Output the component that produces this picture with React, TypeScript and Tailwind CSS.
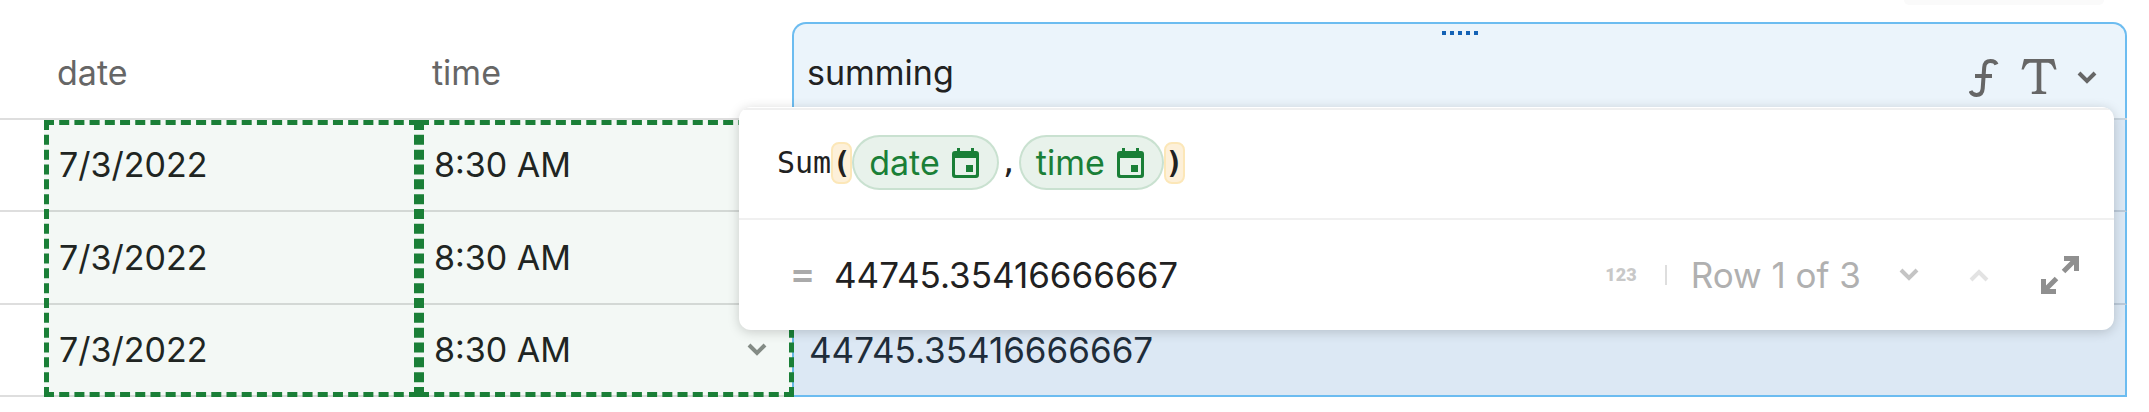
type Row = { id: number; date: string; time: string; summing: string };

const rows: Row[] = [
  { id: 1, date: "7/3/2022", time: "8:30 AM", summing: "44745.35416666667" },
  { id: 2, date: "7/3/2022", time: "8:30 AM", summing: "44745.35416666667" },
  { id: 3, date: "7/3/2022", time: "8:30 AM", summing: "44745.35416666667" },
];

function Chevron({ up = false }: { up?: boolean }) {
  return (
    <svg viewBox="0 0 20 14" className="h-[14px] w-5" fill="none" stroke="currentColor" strokeWidth="4">
      <path d={up ? "M2 12 10 4l8 8" : "M2 2l8 8 8-8"} />
    </svg>
  );
}

function FunctionIcon() {
  return (
    <svg viewBox="0 0 30 38" className="h-[38px] w-[30px]" fill="none" stroke="currentColor">
      <path
        d="M27.5 5.5C26.5 2.5 23.5 2 21.5 2 17.500 2 15.500 4.500 15.200 8.500L13.700 29.500C13.400 34 11 36 7.500 36 4.500 36 2.500 34.500 1.500 32"
        strokeWidth="4"
      />
      <path d="M6 17h17" strokeWidth="4" />
    </svg>
  );
}

function TextTypeIcon() {
  return (
    <svg viewBox="0 0 36 35" className="h-[35px] w-9" fill="currentColor">
      <path d="M3 0h30l2.500 10.500h-2.300C31.500 6.500 29.500 3.800 26 3.800H20.300V30.500c0 1.300.8 1.700 2.200 1.900l2.700.4V35H10.800v-2.200l2.700-.4c1.400-.2 2.200-.6 2.200-1.900V3.800H10C6.500 3.800 4.500 6.500 2.800 10.500H.5z" />
    </svg>
  );
}

function CalendarIcon() {
  return (
    <svg viewBox="0 0 27 30" className="h-[30px] w-[27px]" fill="currentColor">
      <path
        fillRule="evenodd"
        d="M5 0h3v3h11V0h3v3h2a3 3 0 0 1 3 3v21a3 3 0 0 1-3 3H3a3 3 0 0 1-3-3V6a3 3 0 0 1 3-3h2zM3 10v16a1 1 0 0 0 1 1h19a1 1 0 0 0 1-1V10z"
      />
      <path d="M14 17h7v7h-7z" />
    </svg>
  );
}

function ExpandIcon() {
  return (
    <svg viewBox="0 0 40 40" className="h-10 w-10" fill="none" stroke="currentColor" strokeWidth="5">
      <path d="M24 3.500H36.500V16M36.500 3.500 23.500 16.500" />
      <path d="M3.500 24V36.500H16M3.500 36.500 16.500 23.500" />
    </svg>
  );
}

function ColumnChip({ name }: { name: string }) {
  return (
    <span className="flex h-[55px] items-center gap-3 rounded-full border-2 border-[#1a7f37]/15 bg-[#1a7f37]/10 pr-[18px] pl-[15px] text-[#1a7f37]">
      {name}
      <CalendarIcon />
    </span>
  );
}

function Paren({ children }: { children: string }) {
  return (
    <span className="flex h-[42px] w-[21px] items-center justify-center rounded-lg border-2 border-[#fce7b8] bg-[#fdf0d9] font-bold">
      {children}
    </span>
  );
}

function FormulaPopup() {
  return (
    <div
      role="dialog"
      aria-label="Formula"
      className="absolute top-[107px] right-[35px] left-[739px] overflow-hidden rounded-xl bg-white pt-px text-[#212121] shadow-[0_2px_12px_rgba(0,0,0,0.18)]"
    >
      <div className="flex h-[110px] items-start border-t-2 border-[#f0f0f0] pt-[25px] pl-[38px]">
        <code className="flex h-[55px] items-center font-['DejaVu_Sans_Mono',monospace] text-[30px]">
          Sum
          <Paren>(</Paren>
        </code>
        <ColumnChip name="date" />
        <code className="flex h-[55px] items-center px-px font-['DejaVu_Sans_Mono',monospace] text-[30px]">,</code>
        <ColumnChip name="time" />
        <code className="flex h-[55px] items-center font-['DejaVu_Sans_Mono',monospace] text-[30px]">
          <Paren>)</Paren>
        </code>
      </div>

      <div className="flex h-28 items-center border-t-2 border-[#f0f0f0] pr-[34px] pl-[53px] text-[35px]">
        <span className="w-[42px] font-['DejaVu_Sans_Mono',monospace] font-bold text-[#aaaaaa]">=</span>
        <output>44745.35416666667</output>
        <div className="ml-auto flex items-center text-[#b0b0b0]">
          <span className="font-['Roboto',sans-serif] text-lg font-black text-[#c8c8c8]">123</span>
          <span className="mr-6 ml-7 h-5 w-0.5 bg-[#dedede]" />
          <span>Row 1 of 3</span>
          <button type="button" aria-label="Next row" className="ml-[38px] text-[#c4c4c4]">
            <Chevron />
          </button>
          <button type="button" aria-label="Previous row" disabled className="ml-[50px] text-[#e3e3e3]">
            <Chevron up />
          </button>
          <button type="button" aria-label="Expand" className="ml-[51px] text-[#8f8f8f]">
            <ExpandIcon />
          </button>
        </div>
      </div>
    </div>
  );
}

export default function App() {
  return (
    <div className="relative bg-white pr-[22px] font-['Inter',sans-serif] text-[34px] leading-[44px] text-[#212121]">
      <div className="absolute top-0 right-[45px] h-[5px] w-[200px] rounded-b-lg bg-[#fafafa]" />

      <table className="w-full table-fixed border-separate border-spacing-0 text-left">
        <colgroup>
          <col className="w-11" />
          <col className="w-[375px]" />
          <col className="w-[373px]" />
          <col />
        </colgroup>
        <thead>
          <tr className="h-[120px] text-[#666666]">
            <td className="border-b-2 border-[#dedede]" />
            <th className="border-b-2 border-[#dedede] p-0 pt-[27px] pl-[13px] font-normal">date</th>
            <th className="border-b-2 border-[#dedede] p-0 pt-[27px] pl-[13px] font-normal">time</th>
            <th className="border-b-2 border-[#c9d5df] p-0 pt-[22px] font-normal">
              <div className="relative flex h-24 items-center rounded-t-[14px] border-2 border-b-0 border-[#6cbcf0] bg-[#ebf4fb] pr-7 pl-[13px]">
                <span className="absolute top-[7px] left-1/2 flex -translate-x-1/2 gap-1">
                  {[0, 1, 2, 3, 4].map((dot) => (
                    <span key={dot} className="h-1 w-1 bg-[#1462b5]" />
                  ))}
                </span>
                <span className="pt-1 text-[#212121]">summing</span>
                <span className="ml-auto flex items-start pt-3.5">
                  <FunctionIcon />
                  <span className="mr-5 ml-[22px]">
                    <TextTypeIcon />
                  </span>
                  <button type="button" aria-label="Column options" className="mt-3">
                    <Chevron />
                  </button>
                </span>
              </div>
            </th>
          </tr>
        </thead>
        <tbody>
          {rows.map((row) => (
            <tr key={row.id} className="group h-[92px] even:h-[93px]">
              <td className="border-b-2 border-[#dedede]" />
              <td className="border-b-2 border-[#dedede] p-0 pl-[15px]">{row.date}</td>
              <td className="border-b-2 border-[#dedede] p-0 pr-[25px] pl-[15px]">
                <div className="flex items-center justify-between">
                  {row.time}
                  <button type="button" aria-label="Cell options" className="hidden text-[#8a8d8a] group-last:block">
                    <Chevron />
                  </button>
                </div>
              </td>
              <td className="border-x-2 border-b-2 border-x-[#6cbcf0] border-b-[#bccad9] bg-[#dce8f4] p-0 pl-[15px] text-[35px] text-[#1f2d3a] group-last:border-b-[#6cbcf0]">
                <span className="invisible group-last:visible">{row.summing}</span>
              </td>
            </tr>
          ))}
        </tbody>
      </table>

      {/* ranges referenced by the formula */}
      <div className="pointer-events-none absolute top-[120px] bottom-0 left-11 w-[375px] border-5 border-dashed border-[#1a7f37] bg-[#1a7f37]/5" />
      <div className="pointer-events-none absolute top-[120px] bottom-0 left-[419px] w-[375px] border-5 border-dashed border-[#1a7f37] bg-[#1a7f37]/5" />

      <FormulaPopup />
    </div>
  );
}
